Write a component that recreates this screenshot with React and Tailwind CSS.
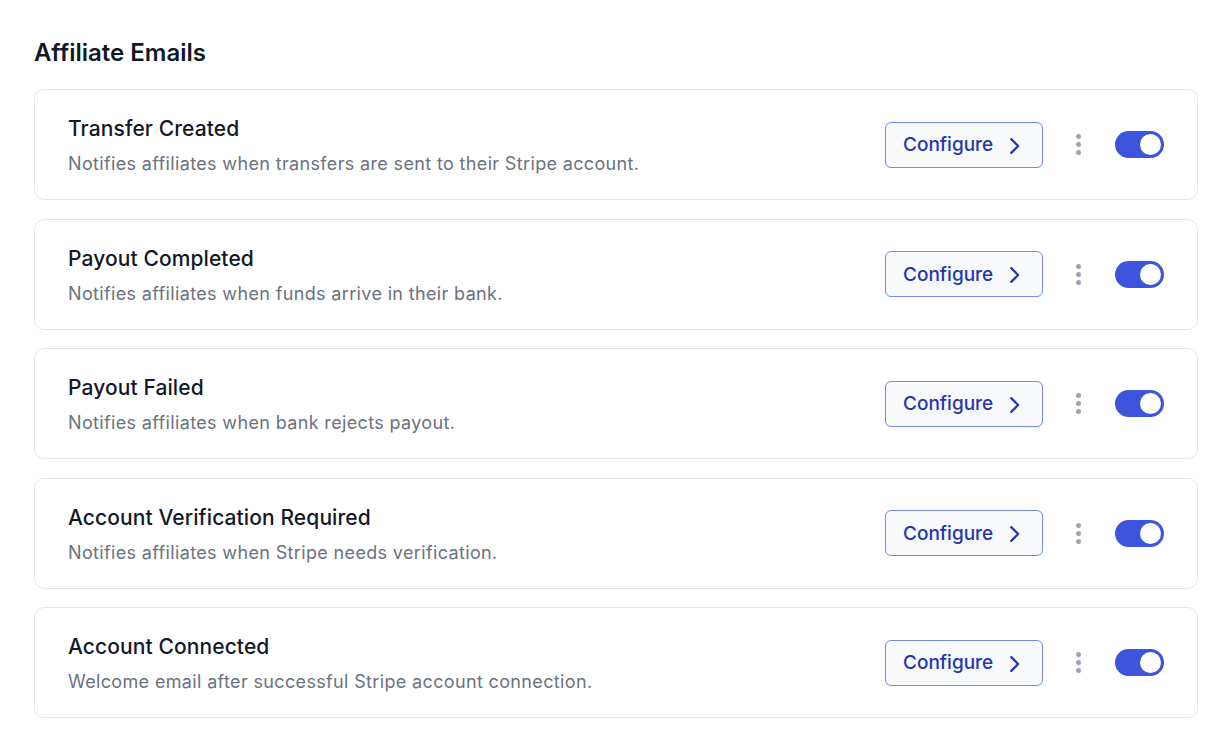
import React, { useState } from 'react';

const emails = [
  { title: 'Transfer Created', desc: 'Notifies affiliates when transfers are sent to their Stripe account.' },
  { title: 'Payout Completed', desc: 'Notifies affiliates when funds arrive in their bank.' },
  { title: 'Payout Failed', desc: 'Notifies affiliates when bank rejects payout.' },
  { title: 'Account Verification Required', desc: 'Notifies affiliates when Stripe needs verification.' },
  { title: 'Account Connected', desc: 'Welcome email after successful Stripe account connection.' },
];

const Toggle = ({ on, onClick }) => (
  <button
    onClick={onClick}
    className={`w-[49px] h-[27px] rounded-full p-[3px] flex items-center transition-all ${on ? 'bg-[#3d55dc] justify-end' : 'bg-gray-300 justify-start'}`}
  >
    <span className="block w-[21px] h-[21px] rounded-full bg-white" />
  </button>
);

const EmailRow = ({ item }) => {
  const [on, setOn] = useState(true);
  return (
    <div className="h-[111px] flex items-center justify-between border border-[#e4e6ea] rounded-[10px] bg-white pl-[33px] pr-[33px]">
      <div className="flex flex-col gap-[7px] pt-[4px]">
        <h3 className="text-[21px] leading-[28px] font-medium text-[#111827] tracking-[0.1px]">{item.title}</h3>
        <p className="text-[18px] leading-[28px] text-[#6b7280] tracking-[0.35px]">{item.desc}</p>
      </div>
      <div className="flex items-center">
        {/* configure button */}
        <button className="w-[158px] h-[46px] flex items-center gap-[10px] pl-[17px] pt-[2px] border border-[#7489ea] rounded-[6px] bg-[#f8f9fb] text-[#2536a8] text-[19px] font-medium">
          Configure
          <svg width="22" height="22" viewBox="0 0 24 24" fill="none" stroke="currentColor" strokeWidth="2.4" strokeLinecap="round" strokeLinejoin="round">
            <path d="M9 4.5l7.5 7.5-7.5 7.5" />
          </svg>
        </button>
        <button className="ml-[33px] mr-[34px] flex flex-col gap-[3px] items-center">
          <span className="w-[5px] h-[5px] rounded-full bg-[#9ca3af]" />
          <span className="w-[5px] h-[5px] rounded-full bg-[#9ca3af]" />
          <span className="w-[5px] h-[5px] rounded-full bg-[#9ca3af]" />
        </button>
        <Toggle on={on} onClick={() => setOn(!on)} />
      </div>
    </div>
  );
};

export default function App() {
  return (
    <div className="min-h-screen bg-white px-[34px] pt-[37px]" style={{ fontFamily: 'Inter, "Noto Sans", sans-serif' }}>
      <h2 className="text-[24px] leading-[32px] font-semibold text-[#111827] mb-[20px]">Affiliate Emails</h2>
      <div className="flex flex-col gap-[18.5px]">
        {emails.map((e) => (
          <EmailRow key={e.title} item={e} />
        ))}
      </div>
    </div>
  );
}
